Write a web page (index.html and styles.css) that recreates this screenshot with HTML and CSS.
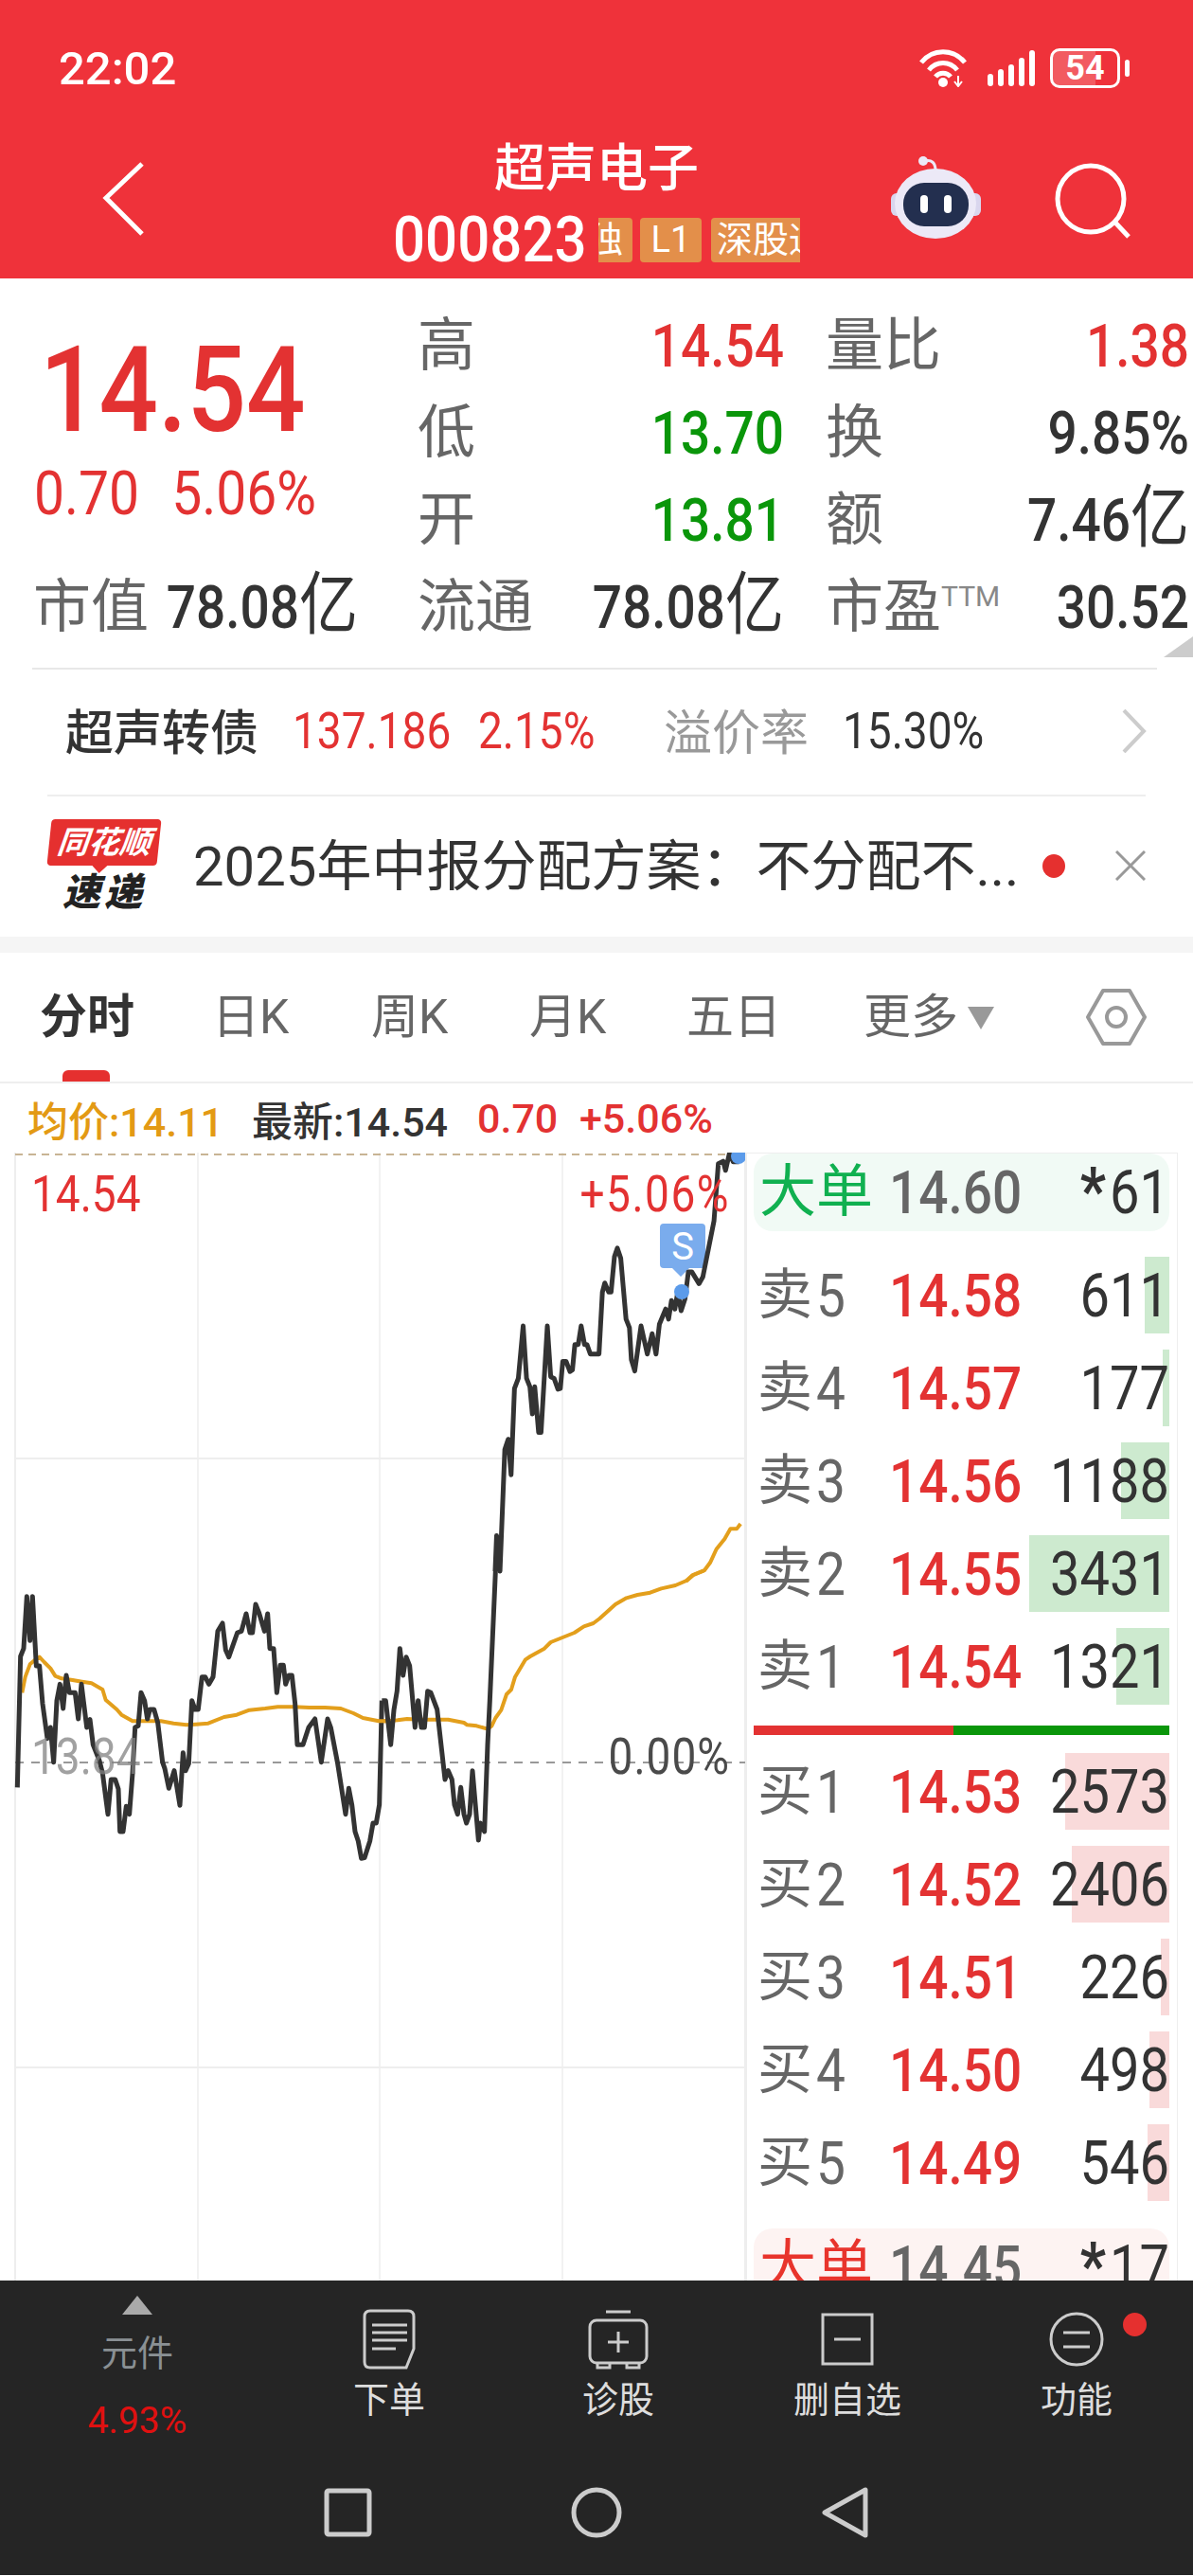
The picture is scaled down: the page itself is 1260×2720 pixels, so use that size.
FILE: index.html
```html
<!DOCTYPE html>
<html lang="zh-CN">
<head>
    <meta charset="utf-8">
    <title>超声电子</title>
    <link rel="stylesheet" href="styles.css">
</head>
<body>
<div class="topbar">
    <div class="status">
        <div class="clock">22:02</div>
        <div class="status-icons">
            <svg class="wifi" viewBox="0 0 50 40" width="50" height="40">
                <path class="w-arc" d="M2 14C14 -1 36 -1 48 14"/>
                <path class="w-arc" d="M10 22C18 12 32 12 40 22"/>
                <path class="w-arc" d="M17 29C21 24 29 24 33 29"/>
                <circle cx="25" cy="35" r="5" fill="#fff"/>
                <path d="M41 28v10M37 34l4 5 4-5" class="w-thin"/>
            </svg>
            <svg class="signal" viewBox="0 0 50 38" width="50" height="38">
                <rect x="0" y="25" width="6" height="13" rx="3" fill="#fff"/>
                <rect x="11" y="20" width="6" height="18" rx="3" fill="#fff"/>
                <rect x="22" y="15" width="6" height="23" rx="3" fill="#fff"/>
                <rect x="33" y="8" width="6" height="30" rx="3" fill="#fff"/>
                <rect x="44" y="0" width="6" height="38" rx="3" fill="#fff"/>
            </svg>
            <div class="battery">54</div>
        </div>
    </div>
    <div class="nav">
        <svg class="back" viewBox="0 0 44 78" width="44" height="78">
            <path d="M42 2L4 38L42 76" fill="none" stroke="#fff" stroke-width="5"/>
        </svg>
        <div class="nav-title">
            <div class="stock-name">超声电子</div>
            <div class="code-row">
                <span class="stock-code">000823</span>
                <div class="tags">
                    <span class="tag tag-cut">独</span>
                    <span class="tag tag-l1">L1</span>
                    <span class="tag tag-sgt">深股通</span>
                </div>
            </div>
        </div>
        <div class="nav-right">
            <svg class="robot" viewBox="940 164 96 90" width="96" height="90">
                <path d="M988 180C988 172 984 168 976 170" fill="none" stroke="#ece9f7" stroke-width="3"/>
                <circle cx="975" cy="170" r="5" fill="#ece9f7"/>
                <rect x="941" y="204" width="14" height="24" rx="6" fill="#d9d6ee"/>
                <rect x="1022" y="204" width="14" height="24" rx="6" fill="#d9d6ee"/>
                <ellipse cx="988" cy="215" rx="43" ry="37" fill="#ece9f7"/>
                <rect x="954" y="193" width="69" height="46" rx="22" fill="#232f4f"/>
                <rect x="972" y="206" width="8" height="19" rx="4" fill="#fff"/>
                <rect x="997" y="206" width="8" height="19" rx="4" fill="#fff"/>
            </svg>
            <svg class="search" viewBox="1115 171 82 82" width="82" height="82">
                <circle cx="1154" cy="210" r="35" fill="none" stroke="#fff" stroke-width="5"/>
                <path d="M1179 234L1194 250" stroke="#fff" stroke-width="5"/>
            </svg>
        </div>
    </div>
</div>

<div class="quote">
    <div class="price-box">
        <div class="last-price"><span class="num">14.54</span></div>
        <div class="last-change"><span class="num">0.70</span><span class="num">5.06%</span></div>
    </div>
    <div class="kv"><span class="label">高</span><span class="num red">14.54</span></div>
    <div class="kv kv-right"><span class="label">量比</span><span class="num red">1.38</span></div>
    <div class="kv"><span class="label">低</span><span class="num green">13.70</span></div>
    <div class="kv kv-right"><span class="label">换</span><span class="num dark">9.85%</span></div>
    <div class="kv"><span class="label">开</span><span class="num green">13.81</span></div>
    <div class="kv kv-right"><span class="label">额</span><span class="num dark">7.46<span class="unit">亿</span></span></div>
    <div class="kv kv-cap"><span class="label">市值</span><span class="num dark">78.08<span class="unit">亿</span></span></div>
    <div class="kv"><span class="label">流通</span><span class="num dark">78.08<span class="unit">亿</span></span></div>
    <div class="kv kv-right"><span class="label">市盈<sup class="ttm">TTM</sup></span><span class="num dark">30.52</span></div>
    <div class="corner"></div>
</div>

<div class="bond">
    <span class="bond-name">超声转债</span>
    <span class="bond-val red num">137.186</span>
    <span class="bond-pct red num">2.15%</span>
    <span class="bond-prem">溢价率</span>
    <span class="bond-rate num">15.30%</span>
    <svg class="bond-arrow" viewBox="0 0 26 46" width="26" height="46">
        <path d="M2 1L23 23L2 45" fill="none" stroke="#ccc" stroke-width="4"/>
    </svg>
</div>

<div class="news">
    <div class="news-logo">
        <div class="logo-top">同花顺</div>
        <div class="logo-bottom">速递</div>
    </div>
    <div class="news-text">2025年中报分配方案：不分配不...</div>
    <div class="news-dot"></div>
    <svg class="news-close" viewBox="0 0 32 32" width="32" height="32">
        <path d="M1 1L31 31M31 1L1 31" stroke="#999" stroke-width="3"/>
    </svg>
</div>

<div class="band"></div>

<div class="tabs">
    <div class="tab tab-on">分时</div>
    <div class="tab">日K</div>
    <div class="tab">周K</div>
    <div class="tab">月K</div>
    <div class="tab">五日</div>
    <div class="tab">更多<i class="tab-down"></i></div>
    <svg class="hex" viewBox="0 0 64 60" width="64" height="60">
        <path d="M18 2H46L62 30L46 58H18L2 30Z" fill="none" stroke="#999" stroke-width="4" stroke-linejoin="round"/>
        <circle cx="32" cy="30" r="10" fill="none" stroke="#999" stroke-width="4"/>
    </svg>
</div>

<div class="info-line">
    <span class="info-avg">均价:14.11</span>
    <span class="info-new">最新:14.54</span>
    <span class="info-chg red">0.70</span>
    <span class="info-pct red">+5.06%</span>
</div>

<div class="main">
    <div class="chart">
        <svg class="chart-svg" viewBox="0 1218 787 1191" width="787" height="1191">
            <path class="grid-v" d="M209 1218V2409M401 1218V2409M594 1218V2409"/>
            <path class="grid-edge" d="M16 1218V2409M787 1218V2409"/>
            <path class="grid-edge" d="M16 1541H787M16 2184H787"/>
            <path class="dash-top" d="M16 1220H787"/>
            <path class="dash-mid" d="M16 1862H787"/>

            <path d="M704 1293H741Q745 1293 745 1297V1336Q745 1340 741 1340H728L719 1349L710 1340H701Q697 1340 697 1336V1297Q697 1293 701 1293Z" fill="#7aaced"/>
            <text class="flag-s" x="721" y="1331">S</text>

            <g transform="translate(10 1660) scale(.33333)">
                <polyline class="avg-line" points="40,385 50,335 65,295 80,282 95,272 110,288 130,308 145,332 165,340 200,345 230,350 260,355 295,375 305,408 340,438 355,455 390,475 440,475 480,475 520,482 560,487 590,485 630,482 680,462 720,455 760,440 810,435 850,430 900,430 950,432 1000,432 1050,435 1090,450 1120,465 1170,475 1200,475"/>
                <polyline class="price-line" points="25,685 35,270 45,245 55,80 65,220 73,80 85,300 95,300 105,420 120,530 130,495 140,605 150,410 160,358 170,435 180,330 190,385 208,385 218,468 228,358 245,495 255,470 265,550 285,600 295,640 312,770 322,660 335,660 345,690 350,825 360,825 370,745 380,770 390,640 398,495 408,490 417,385 428,410 437,468 445,438 458,438 470,480 485,605 492,625 505,688 522,632 540,742 550,575 558,632 568,610 578,410 588,438 598,438 610,335 620,335 632,358 645,335 660,190 675,165 685,250 695,272 722,195 735,190 750,135 762,195 770,195 780,105 790,130 808,190 818,135 825,245 837,245 847,385 858,298 868,298 875,358 885,330 895,330 905,420 912,550 930,550 948,495 968,468 988,605 1008,468 1018,495 1040,610 1065,770 1075,688 1085,740 1095,825 1105,855 1115,910 1125,908 1142,855 1152,798 1162,798 1172,740 1180,410"/>
            </g>
            <g transform="translate(400 1660) scale(.33333)">
                <polyline class="avg-line" points="0,475 30,475 60,472 90,468 130,470 220,470 270,480 280,487 310,490 345,500 358,490 370,465 388,440 405,390 420,375 432,335 465,280 480,270 525,245 545,225 620,195 650,175 680,165 700,150 750,105 785,85 820,75 860,68 895,55 940,45 975,30 995,12 1030,-2"/>
                <polyline class="price-line" points="10,410 22,410 38,550 48,440 58,380 67,245 77,330 87,272 98,300 115,495 125,410 135,495 145,495 155,380 165,385 185,438 210,660 220,632 232,660 240,740 250,770 260,685 270,770 278,798 288,770 297,632 316,852 322,798 335,825 345,550 352,410 370,0"/>
            </g>
            <g transform="translate(0 1210) scale(.5102 .35714)">
                <polyline class="avg-line" points="1420,1290 1435,1272 1458,1258 1470,1235 1483,1195 1500,1165 1512,1135 1525,1135 1533,1120"/>
                <polyline class="price-line" points="1025,1260 1028,1155 1035,1260 1045,900 1052,870 1058,975 1065,720 1073,690 1083,535 1090,690 1097,715 1102,795 1107,715 1115,850 1120,850 1133,535 1140,685 1147,690 1155,722 1160,720 1165,640 1172,640 1180,670 1185,665 1190,590 1197,590 1203,535 1210,590 1215,590 1222,618 1240,618 1247,435 1252,408 1260,435 1265,435 1272,330 1278,305 1285,335 1296,515 1303,540 1307,635 1314,668 1327,535 1340,618 1350,558 1358,618 1365,530 1378,485 1384,515 1390,460 1397,485 1403,435 1410,490 1418,455 1425,375 1432,375 1447,410 1455,390 1478,225 1487,55 1497,48 1502,75 1510,25 1518,50 1530,50"/>
            </g>
            <circle cx="720" cy="1365" r="8" fill="#5b9bea"/>
            <circle cx="780" cy="1222" r="8" fill="#5b9bea"/>
        </svg>
        <span class="c-label c-high-l num">14.54</span>
        <span class="c-label c-high-r num">+5.06%</span>
        <span class="c-label c-mid-l num">13.84</span>
        <span class="c-label c-mid-r num">0.00%</span>
    </div>

    <div class="depth">
        <div class="big-order big-sell">
            <span class="big-label">大单</span><span class="d-price d-gray num">14.60</span><span class="d-qty num"><em class="star">*</em>61</span>
        </div>
        <div class="depth-group">
            <div class="depth-row"><i class="bar bar-sell" style="width:26px"></i><span class="d-label">卖<b class="num">5</b></span><span class="d-price num">14.58</span><span class="d-qty num">611</span></div>
            <div class="depth-row"><i class="bar bar-sell" style="width:7px"></i><span class="d-label">卖<b class="num">4</b></span><span class="d-price num">14.57</span><span class="d-qty num">177</span></div>
            <div class="depth-row"><i class="bar bar-sell" style="width:51px"></i><span class="d-label">卖<b class="num">3</b></span><span class="d-price num">14.56</span><span class="d-qty num">1188</span></div>
            <div class="depth-row"><i class="bar bar-sell" style="width:148px"></i><span class="d-label">卖<b class="num">2</b></span><span class="d-price num">14.55</span><span class="d-qty num">3431</span></div>
            <div class="depth-row"><i class="bar bar-sell" style="width:56px"></i><span class="d-label">卖<b class="num">1</b></span><span class="d-price num">14.54</span><span class="d-qty num">1321</span></div>
        </div>
        <div class="ratio"><div class="ratio-buy" style="width:48%"></div><div class="ratio-sell"></div></div>
        <div class="depth-group">
            <div class="depth-row"><i class="bar bar-buy" style="width:110px"></i><span class="d-label">买<b class="num">1</b></span><span class="d-price num">14.53</span><span class="d-qty num">2573</span></div>
            <div class="depth-row"><i class="bar bar-buy" style="width:103px"></i><span class="d-label">买<b class="num">2</b></span><span class="d-price num">14.52</span><span class="d-qty num">2406</span></div>
            <div class="depth-row"><i class="bar bar-buy" style="width:9px"></i><span class="d-label">买<b class="num">3</b></span><span class="d-price num">14.51</span><span class="d-qty num">226</span></div>
            <div class="depth-row"><i class="bar bar-buy" style="width:21px"></i><span class="d-label">买<b class="num">4</b></span><span class="d-price num">14.50</span><span class="d-qty num">498</span></div>
            <div class="depth-row"><i class="bar bar-buy" style="width:23px"></i><span class="d-label">买<b class="num">5</b></span><span class="d-price num">14.49</span><span class="d-qty num">546</span></div>
        </div>
        <div class="big-order big-buy">
            <span class="big-label">大单</span><span class="d-price d-gray num">14.45</span><span class="d-qty num"><em class="star">*</em>17</span>
        </div>
    </div>
</div>

<div class="toolbar">
    <div class="tool-first">
        <i class="tool-up"></i>
        <div class="tool-sector">元件</div>
        <div class="tool-pct">4.93%</div>
    </div>
    <div class="tool">
        <div class="tool-icon">
            <svg viewBox="0 0 56 64" width="56" height="64">
                <path class="ti" d="M8 2H48Q54 2 54 8V42L46 62H8Q2 62 2 56V8Q2 2 8 2Z"/>
                <path class="ti" d="M10 17H47M10 25H47M10 33H47M10 42H35"/>
            </svg>
        </div>
        <div class="tool-name">下单</div>
    </div>
    <div class="tool">
        <div class="tool-icon">
            <svg viewBox="0 0 66 64" width="66" height="64">
                <path class="ti" d="M20 3H46"/>
                <rect class="ti" x="3" y="12" width="60" height="45" rx="7"/>
                <path class="ti" d="M11 57V62H24V57M42 57V62H55V57"/>
                <path class="ti" d="M33 24V46M22 35H44"/>
            </svg>
        </div>
        <div class="tool-name">诊股</div>
    </div>
    <div class="tool">
        <div class="tool-icon">
            <svg viewBox="0 0 56 64" width="56" height="64">
                <rect class="ti" x="2" y="6" width="52" height="52"/>
                <path class="ti" d="M14 32H42"/>
            </svg>
        </div>
        <div class="tool-name">删自选</div>
    </div>
    <div class="tool">
        <div class="tool-icon">
            <svg viewBox="0 0 60 64" width="60" height="64">
                <circle class="ti" cx="30" cy="32" r="27"/>
                <path class="ti" d="M16 25H44M16 40H44"/>
            </svg>
            <i class="tool-dot"></i>
        </div>
        <div class="tool-name">功能</div>
    </div>
</div>

<div class="navkeys">
    <svg viewBox="0 0 60 54" width="60" height="54"><rect class="nk" x="7" y="4" width="45" height="46" rx="2"/></svg>
    <svg viewBox="0 0 60 54" width="60" height="54"><circle class="nk" cx="30" cy="27" r="24"/></svg>
    <svg viewBox="0 0 60 54" width="60" height="54"><path class="nk" d="M52 3V51L9 27Z" stroke-linejoin="round"/></svg>
</div>
</body>
</html>
```

FILE: styles.css
```css
* {
    box-sizing: border-box;
}
body {
    margin: 0;
    width: 1260px;
    height: 2720px;
    overflow: hidden;
    background: #fff;
    color: #333;
    font-family: Roboto, "Noto Sans CJK SC", sans-serif;
}
.red { color: #e33232; }
.green { color: #0a960a; }
.dark { color: #333; }
/* digits in the shot are taller than the font */
.num {
    display: inline-block;
    transform: scaleY(1.15);
}

/* top bar */
.topbar {
    height: 294px;
    background: #ef323a;
    color: #fff;
}
.status {
    height: 144px;
    padding: 44px 77px 0 62px;
    display: flex;
    justify-content: space-between;
}
.clock {
    font-size: 49px;
    line-height: 58px;
    font-weight: 500;
}
.status-icons {
    display: flex;
    align-items: flex-start;
    padding-top: 7px;
}
.wifi {
    margin: 1px 22px 0 0;
}
.w-arc {
    fill: none;
    stroke: #fff;
    stroke-width: 5;
}
.w-thin {
    fill: none;
    stroke: #fff;
    stroke-width: 2;
}
.signal {
    margin: 2px 16px 0 0;
}
.battery {
    position: relative;
    width: 74px;
    height: 42px;
    border: 3px solid #fff;
    border-radius: 10px;
    background: linear-gradient(90deg, rgba(255,255,255,.2) 66%, transparent 66%);
    text-align: center;
    font-size: 36px;
    line-height: 36px;
    font-weight: 700;
}
.battery:after {
    content: '';
    position: absolute;
    right: -13px;
    top: 9px;
    width: 5px;
    height: 18px;
    border-radius: 3px;
    background: #fff;
}
.nav {
    height: 150px;
    display: grid;
    grid-template-columns: 1fr auto 1fr;
}
.back {
    margin: 27px 0 0 108px;
}
.nav-title {
    width: 430px;
}
.stock-name {
    height: 70px;
    line-height: 70px;
    text-align: center;
    font-size: 54px;
    font-weight: 500;
}
.code-row {
    margin-top: 16px;
    height: 47px;
    display: flex;
}
.stock-code {
    width: 217px;
    font-size: 60px;
    line-height: 47px;
    font-weight: 500;
    transform: scaleY(1.1);
}
.tags {
    width: 213px;
    height: 47px;
    display: flex;
    overflow: hidden;
}
.tag {
    flex: none;
    height: 47px;
    background: #e38f4a;
    font-size: 38px;
    line-height: 47px;
    text-align: center;
    border-radius: 4px;
    overflow: hidden;
}
.tag-cut {
    width: 36px;
    padding-right: 10px;
    display: flex;
    justify-content: flex-end;
    border-radius: 0 4px 4px 0;
}
.tag-l1 {
    width: 65px;
    margin-left: 8px;
}
.tag-sgt {
    width: 126px;
    margin-left: 10px;
}
.nav-right {
    display: flex;
    justify-content: flex-end;
    align-items: flex-start;
    padding-right: 65px;
}
.robot {
    margin: 20px 77px 0 0;
}
.search {
    margin-top: 27px;
}

/* quote block */
.quote {
    position: relative;
    height: 411px;
    padding: 25px 4px 0 0;
    display: grid;
    grid-template-columns: 441px 387px 428px;
    grid-template-rows: repeat(4, 92px);
}
.price-box {
    grid-row: 1 / span 3;
    padding-left: 42px;
}
.last-price {
    margin-top: 28px;
    font-size: 110px;
    line-height: 130px;
    font-weight: 500;
    color: #e33232;
}
.last-change {
    margin: 12px 0 0 -6px;
    display: flex;
    gap: 34px;
    font-size: 57px;
    line-height: 64px;
    color: #e33232;
}
.kv {
    display: flex;
    justify-content: space-between;
    align-items: center;
}
.kv-right {
    padding-left: 44px;
}
.kv-cap {
    padding: 0 63px 0 35px;
}
.kv .label {
    font-size: 61px;
    line-height: 70px;
    color: #666;
}
.kv .num {
    font-size: 55px;
    line-height: 70px;
    font-weight: 500;
}
.unit {
    font-size: 62px;
    font-weight: 400;
    line-height: 0;
}
.ttm {
    font-size: 30px;
    line-height: 0;
    vertical-align: 22px;
    color: #888;
}
.corner {
    position: absolute;
    right: 0;
    bottom: 11px;
    width: 0;
    height: 0;
    border-left: 31px solid transparent;
    border-bottom: 22px solid #ccc;
}

/* convertible bond */
.bond {
    margin: 0 38px 0 34px;
    height: 134px;
    padding: 0 0 3px 35px;
    border-top: 2px solid #e8e8e8;
    display: flex;
    align-items: center;
    font-size: 46px;
}
.bond-name {
    width: 204px;
    margin-top: -4px;
    font-size: 51px;
    font-weight: 500;
}
.bond-val {
    margin-left: 36px;
    width: 167px;
}
.bond-pct {
    margin-left: 29px;
    width: 128px;
}
.bond-prem {
    margin: -4px 0 0 68px;
    width: 153px;
    font-size: 51px;
    color: #999;
}
.bond-rate {
    margin-left: 36px;
}
.bond-arrow {
    margin: 0 11px 0 auto;
}

/* news */
.news {
    margin: 0 50px;
    height: 150px;
    padding-left: 2px;
    border-top: 2px solid #eee;
    display: flex;
    align-items: center;
}
.news-logo {
    width: 116px;
    height: 100px;
    margin-right: 36px;
}
.logo-top {
    position: relative;
    height: 49px;
    background: #e5302f;
    border-radius: 4px;
    transform: skewX(-6deg);
    color: #fff;
    font-size: 33px;
    line-height: 49px;
    text-align: center;
    font-weight: 700;
    font-style: italic;
}
.logo-top:after {
    content: '';
    position: absolute;
    left: 48px;
    bottom: -8px;
    border-left: 8px solid transparent;
    border-right: 8px solid transparent;
    border-top: 8px solid #e5302f;
}
.logo-bottom {
    margin-top: 7px;
    font-size: 40px;
    line-height: 44px;
    letter-spacing: 4px;
    text-align: center;
    font-weight: 900;
    font-style: italic;
    color: #222;
}
.news-text {
    width: 897px;
    font-size: 58px;
    line-height: 70px;
    white-space: nowrap;
    overflow: hidden;
}
.news-dot {
    width: 24px;
    height: 25px;
    border-radius: 50%;
    background: #e5302f;
    margin-top: -2px;
}
.news-close {
    margin: -2px 0 0 53px;
}
.band {
    height: 17px;
    background: #f5f5f5;
}

/* tabs */
.tabs {
    position: relative;
    height: 138px;
    padding-left: 42px;
    border-bottom: 2px solid #eee;
    display: flex;
    font-size: 50px;
    line-height: 136px;
    color: #666;
}
.tab {
    position: relative;
    width: 166px;
}
.tab-on {
    width: 182px;
    color: #333;
    font-weight: 700;
}
.tab-on:after {
    content: '';
    position: absolute;
    left: 24px;
    bottom: 0;
    width: 50px;
    height: 12px;
    border-radius: 6px 6px 0 0;
    background: #e5302f;
}
.tab:nth-child(2) {
    width: 168px;
}
.tab:nth-child(3) {
    width: 167px;
}
.tab:nth-child(5) {
    width: 187px;
}
.tab-down {
    display: inline-block;
    margin-left: 10px;
    vertical-align: 4px;
    border-left: 14px solid transparent;
    border-right: 14px solid transparent;
    border-top: 24px solid #999;
}
.hex {
    position: absolute;
    left: 1147px;
    top: 38px;
}
.info-line {
    height: 73px;
    padding-left: 29px;
    display: flex;
    align-items: center;
    font-size: 43px;
    font-weight: 500;
}
.info-avg {
    width: 237px;
    color: #e39a14;
}
.info-new {
    width: 238px;
}
.info-chg {
    width: 108px;
}

/* chart + depth */
.main {
    height: 1191px;
    display: flex;
    overflow: hidden;
}
.chart {
    position: relative;
    width: 787px;
    height: 1191px;
}
.chart-svg {
    display: block;
}
.grid-v {
    stroke: #e5e5e5;
    stroke-width: 1;
}
.grid-edge {
    fill: none;
    stroke: #eee;
    stroke-width: 2;
}
.dash-top {
    stroke: #c8b494;
    stroke-width: 2;
    stroke-dasharray: 8 6;
}
.dash-mid {
    stroke: #999;
    stroke-width: 2;
    stroke-dasharray: 9 8;
}
.price-line, .avg-line {
    fill: none;
    vector-effect: non-scaling-stroke;
    stroke-linejoin: round;
}
.price-line {
    stroke: #333;
    stroke-width: 5;
}
.avg-line {
    stroke: #e39f1c;
    stroke-width: 4;
}
.flag-s {
    fill: #fff;
    font-size: 40px;
    text-anchor: middle;
}
.c-label {
    position: absolute;
    font-size: 46px;
    line-height: 44px;
}
.c-high-l {
    left: 33px;
    top: 22px;
    color: #e33232;
}
.c-high-r {
    right: 16px;
    top: 22px;
    letter-spacing: 1.5px;
    color: #e33232;
}
.c-mid-l {
    left: 33px;
    top: 616px;
    color: rgba(130,130,130,.75);
}
.c-mid-r {
    right: 16px;
    top: 616px;
    letter-spacing: 1px;
    color: #4a4a4a;
}
.depth {
    width: 457px;
    height: 1191px;
    padding: 0 8px 0 7px;
    border-left: 2px solid #eee;
    border-right: 1px solid #eee;
    border-top: 1px solid #eee;
    font-size: 56px;
}
.big-order {
    height: 82px;
    border-radius: 20px;
    padding-left: 4px;
    display: grid;
    grid-template-columns: 139px 137px 1fr;
    align-items: center;
}
.big-sell {
    background: #f1faf5;
    margin-bottom: 27px;
}
.big-sell .big-label {
    color: #10b050;
}
.big-buy {
    background: #fdf3f2;
    margin-top: 29px;
}
.big-buy .big-label {
    color: #e8342c;
}
.big-label {
    margin-left: 2px;
    font-size: 60px;
    line-height: 70px;
}
.depth-group {
    display: flex;
    flex-direction: column;
    gap: 17px;
}
.depth-row {
    position: relative;
    height: 81px;
    padding-left: 4px;
    display: grid;
    grid-template-columns: 139px 137px 1fr;
    align-items: center;
}
.bar {
    position: absolute;
    right: 0;
    top: 0;
    bottom: 0;
}
.bar-sell {
    background: #cdeacf;
}
.bar-buy {
    background: #f9dada;
}
.d-label {
    position: relative;
    font-size: 58px;
    line-height: 70px;
    color: #666;
}
.d-label b {
    margin-left: 4px;
    font-size: 55px;
    font-weight: 400;
}
.d-price {
    position: relative;
    font-size: 55px;
    font-weight: 500;
    line-height: 70px;
    color: #e33232;
    white-space: nowrap;
}
.d-gray {
    color: #666;
}
.d-qty {
    position: relative;
    line-height: 70px;
    text-align: right;
    white-space: nowrap;
}
.star {
    margin-right: 4px;
    font-size: 60px;
    font-style: normal;
    font-weight: 700;
    line-height: 0;
}
.ratio {
    margin: 22px 0 19px;
    height: 10px;
    display: flex;
}
.ratio-buy {
    background: #e33232;
}
.ratio-sell {
    flex: 1;
    background: #0a960a;
}

/* bottom */
.toolbar {
    height: 196px;
    background: #252525;
    display: flex;
}
.tool-first {
    width: 290px;
    display: flex;
    flex-direction: column;
}
.tool-up {
    display: block;
    margin: 16px 0 0 129px;
    width: 0;
    border-left: 16px solid transparent;
    border-right: 16px solid transparent;
    border-bottom: 20px solid #aaa;
}
.tool-sector {
    margin-top: 22px;
    text-align: center;
    font-size: 38px;
    line-height: 38px;
    color: #8a9094;
}
.tool-pct {
    margin-top: 33px;
    text-align: center;
    font-size: 39px;
    line-height: 38px;
    color: #e01010;
}
.tool {
    width: 242px;
    padding-top: 30px;
    text-align: center;
    color: #ddd;
}
.tool-icon {
    position: relative;
    height: 64px;
    display: flex;
    justify-content: center;
}
.ti {
    fill: none;
    stroke: #ccc;
    stroke-width: 3;
}
.tool-dot {
    position: absolute;
    left: 170px;
    top: 4px;
    width: 25px;
    height: 25px;
    border-radius: 50%;
    background: #e5302f;
}
.tool-name {
    margin-top: 12px;
    font-size: 38px;
    line-height: 40px;
}
.navkeys {
    height: 115px;
    padding-top: 22px;
    background: #252525;
    display: flex;
    justify-content: center;
    gap: 202px;
}
.nk {
    fill: none;
    stroke: #ccc;
    stroke-width: 5;
}
```
